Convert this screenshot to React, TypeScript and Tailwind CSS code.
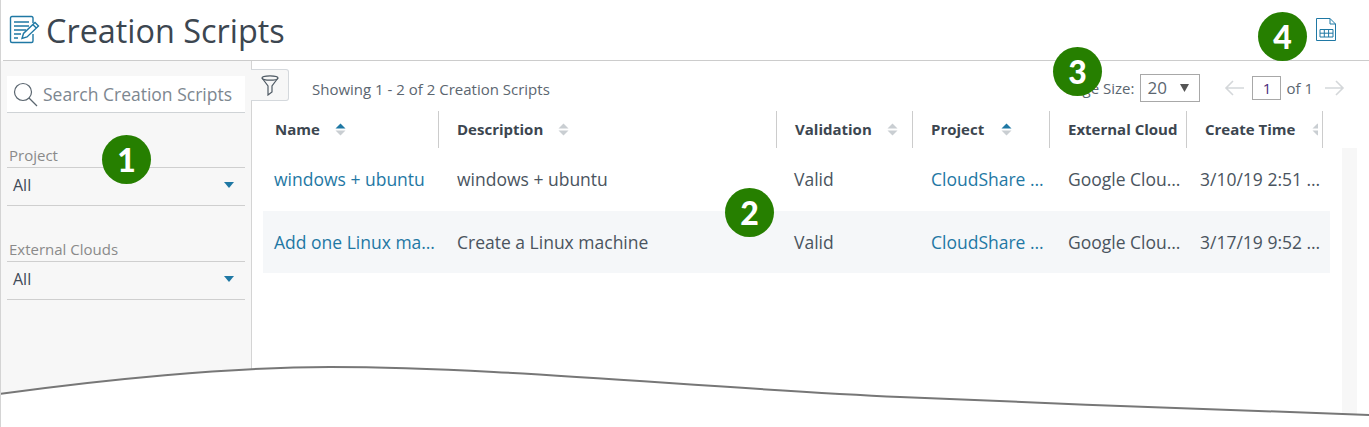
import React from "react";

const columns = [
  { label: "Name", width: "w-[176px]", sort: "up", gap: "ml-[15px]", pad: "pl-[12px]" },
  { label: "Description", width: "w-[338px]", sort: "none", gap: "ml-[15px]", pad: "pl-[18px]" },
  { label: "Validation", width: "w-[136px]", sort: "none", gap: "ml-[15px]", pad: "pl-[18px]" },
  { label: "Project", width: "w-[137px]", sort: "up", gap: "ml-[17px]", pad: "pl-[18px]" },
  { label: "External Cloud", width: "w-[137px]", sort: "hidden", gap: "", pad: "pl-[18px]" },
  { label: "Create Time", width: "w-[136px]", sort: "clip", gap: "ml-[17px]", pad: "pl-[18px]" },
];

const rows = [
  {
    name: "windows + ubuntu",
    description: "windows + ubuntu",
    project: "CloudShare Project",
    cloud: "Google Cloud Platform",
    time: "3/10/19 2:51 PM UTC",
    height: "h-[63px]",
  },
  {
    name: "Add one Linux machine",
    description: "Create a Linux machine",
    project: "CloudShare Project",
    cloud: "Google Cloud Platform",
    time: "3/17/19 9:52 AM UTC",
    height: "h-[62px]",
  },
];

function SortIcon({ active, clip }: { active?: boolean; clip?: boolean }) {
  return (
    <svg width={clip ? 6 : 11} height="13" viewBox={clip ? "0 0 6 13" : "0 0 11 13"} className="shrink-0 block">
      <path d="M5.5 0.5 L10.5 5.5 H0.5 Z" fill={active ? "#1f78a4" : "#c9ced2"} />
      <path d="M0.5 7.5 H10.5 L5.5 12.5 Z" fill="#c9ced2" />
    </svg>
  );
}

function Badge({ n, className }: { n: number; className: string }) {
  return (
    <div
      className={`absolute w-[49px] h-[49px] rounded-full bg-[#267f00] text-white font-black text-[32px] font-['Lato',sans-serif] flex items-center justify-center ${className}`}
    >
      {n}
    </div>
  );
}

function FilterSelect({ label }: { label: string }) {
  return (
    <div>
      <div className="pl-[2px] text-[15px] leading-[20px] text-[#8a8a8a]">{label}</div>
      <div className="mt-[2px] h-[39px] border-y border-[#cfcfcf] flex items-center justify-between pl-[6px] pr-[11px] pb-[4px]">
        <span className="text-[16px] text-[#3f4a57]">All</span>
        <svg width="10" height="6" viewBox="0 0 10 6">
          <path d="M0 0 H10 L5 6 Z" fill="#1f78a4" />
        </svg>
      </div>
    </div>
  );
}

export default function App() {
  return (
    <div className="relative w-[1369px] h-[427px] overflow-hidden bg-white font-['Open_Sans',sans-serif] border-l border-[#d4d4d4]">
      {/* HEADER */}
      <div className="h-[61px] ml-[2px] border-b border-[#cccccc] flex items-start justify-between">
        <div className="flex items-center pl-[6px] pt-[8px]">
          <svg width="31" height="30" viewBox="0 0 31 30" fill="none" stroke="#1f78a4" strokeWidth="1.4">
            <path d="M24 8 V3 Q24 1.5 22.5 1.5 H3 Q1.5 1.5 1.5 3 V26 Q1.5 27.5 3 27.5 H22.5 Q24 27.5 24 26 V19" />
            <path d="M5 7 H20 M5 11 H20 M5 15 H17 M5 19 H12 M5 23 H9" strokeWidth="1.6" />
            <path d="M13 23.5 L14.5 18.5 L26 7.5 L29.5 11 L18 22 Z M23.8 9.5 L27.3 13" />
          </svg>
          <h1 className="ml-[6px] text-[32.4px] leading-[44px] text-[#3c4650]">Creation Scripts</h1>
        </div>
        <svg width="20" height="24" viewBox="0 0 20 24" fill="none" className="mt-[18px] mr-[33px]" stroke="#1f78a4">
          <path d="M0.5 0.5 H14 L19.5 6 V22.5 H0.5 Z M14 0.5 V6 H19.5" />
          <path d="M4 11.5 H17 V19 H4 Z M4 15.2 H17 M8.3 11.5 V19 M12.6 11.5 V19" />
        </svg>
      </div>

      <div className="flex h-[366px]">
        {/* SIDEBAR */}
        <div className="w-[251px] shrink-0 bg-[#f7f7f7] border-r border-[#d4d4d4] pl-[6px] pr-[6px] pt-[15px]">
          <div className="h-[37px] bg-white border-b border-[#cfd3d6] flex items-center pl-[6px] pr-[2px]">
            <svg width="25" height="25" viewBox="0 0 25 25" fill="none" stroke="#5b6670" strokeWidth="1.2" className="shrink-0">
              <circle cx="10" cy="10" r="8.5" />
              <path d="M16 16 L24 24" />
            </svg>
            <span className="ml-[5px] text-[17.5px] text-[#7d8790] whitespace-nowrap">Search Creation Scripts</span>
          </div>
          <div className="mt-[32px]">
            <FilterSelect label="Project" />
          </div>
          <div className="mt-[33px]">
            <FilterSelect label="External Clouds" />
          </div>
        </div>

        {/* MAIN */}
        <div className="relative flex-1 min-w-0">
          {/* TOOLBAR */}
          <div className="h-[50px] flex items-start">
            <button className="mt-[8px] w-[38px] h-[32px] -ml-[1px] bg-[#f7f7f7] border border-[#d4d8dc] border-l-0 rounded-r-[3px] flex items-center justify-center">
              <svg width="18" height="21" viewBox="0 0 18 21" fill="none" stroke="#4f5a64" strokeWidth="1.2">
                <ellipse cx="9" cy="3" rx="8" ry="2.2" />
                <path d="M1 3 L7 11 V20 L11 17 V11 L17 3" />
              </svg>
            </button>
            <div className="ml-[23px] mt-[18px] text-[15px] leading-[20px] text-[#5b6670] whitespace-nowrap">
              Showing 1 - 2 of 2 Creation Scripts
            </div>
            <div className="ml-auto mt-[13px] flex items-center text-[15px] text-[#5b6670] whitespace-nowrap">
              <span>Page Size:</span>
              <div className="ml-[6px] w-[60px] h-[28px] border border-[#a8a8a8] flex items-center justify-between pl-[6px] pr-[10px]">
                <span className="text-[17px]">20</span>
                <svg width="9" height="8" viewBox="0 0 9 8">
                  <path d="M0 0 H9 L4.5 8 Z" fill="#555555" />
                </svg>
              </div>
              <svg width="21" height="16" viewBox="0 0 21 16" fill="none" stroke="#d4d7da" strokeWidth="1.6" className="ml-[24px]">
                <path d="M20 8 H2 M9 1 L2 8 L9 15" />
              </svg>
              <div className="ml-[7px] w-[29px] h-[24px] border border-[#a8a8a8] flex items-center justify-center text-[#4b2a7a]">1</div>
              <span className="ml-[5px]">of 1</span>
              <svg width="21" height="16" viewBox="0 0 21 16" fill="none" stroke="#d4d7da" strokeWidth="1.6" className="ml-[11px] mr-[24px]">
                <path d="M1 8 H19 M12 1 L19 8 L12 15" />
              </svg>
            </div>
          </div>

          {/* TABLE */}
          <div className="ml-[11px] w-[1067px]">
            <div className="flex h-[37px]">
              {columns.map((c) => (
                <div key={c.label} className={`${c.width} shrink-0 border-r border-[#cccccc] flex items-center ${c.pad}`}>
                  <span className="text-[15px] font-bold text-[#3c4650] whitespace-nowrap">{c.label}</span>
                  {c.sort !== "hidden" && (
                    <span className={c.gap}>
                      <SortIcon active={c.sort === "up"} clip={c.sort === "clip"} />
                    </span>
                  )}
                </div>
              ))}
            </div>
            {rows.map((r, i) => (
              <div key={r.name} className={`flex items-center ${r.height} w-[1067px] text-[17.5px] ${i === 1 ? "bg-[#f5f7f9] pt-[1px]" : ""}`}>
                <div className="w-[176px] shrink-0 pl-[11px] pr-[3px] truncate text-[#1f78a4]">{r.name}</div>
                <div className="w-[338px] shrink-0 pl-[18px] truncate text-[#4a545e]">{r.description}</div>
                <div className="w-[136px] shrink-0 pl-[17px] truncate text-[#4a545e]">Valid</div>
                <div className="w-[137px] shrink-0 pl-[18px] pr-[5px] truncate text-[#1f78a4]">{r.project}</div>
                <div className="w-[137px] shrink-0 pl-[18px] pr-[5px] truncate text-[#4a545e]">{r.cloud}</div>
                <div className="w-[136px] shrink-0 pl-[13px] truncate text-[#4a545e]">{r.time}</div>
              </div>
            ))}
          </div>

          {/* SCROLLBAR TRACK */}
          <div className="absolute left-[1090px] top-[87px] w-[15px] h-[279px] bg-[#f7f7f7]" />
        </div>
      </div>

      {/* CALLOUTS */}
      <Badge n={1} className="left-[101px] top-[135px]" />
      <Badge n={2} className="left-[724px] top-[188px]" />
      <Badge n={3} className="left-[1052px] top-[47px]" />
      <Badge n={4} className="left-[1257px] top-[12px]" />

      {/* TORN EDGE */}
      <svg width="1368" height="427" viewBox="1 0 1368 427" className="absolute left-0 top-0 pointer-events-none">
        <path d="M0 394 C 100 380 230 367 330 367 C 500 367 700 388 900 397 C 1060 404 1200 409 1370 415 V428 H0 Z" fill="#ffffff" />
        <path d="M0 394 C 100 380 230 367 330 367 C 500 367 700 388 900 397 C 1060 404 1200 409 1370 415" fill="none" stroke="#777777" strokeWidth="2" />
      </svg>
    </div>
  );
}
